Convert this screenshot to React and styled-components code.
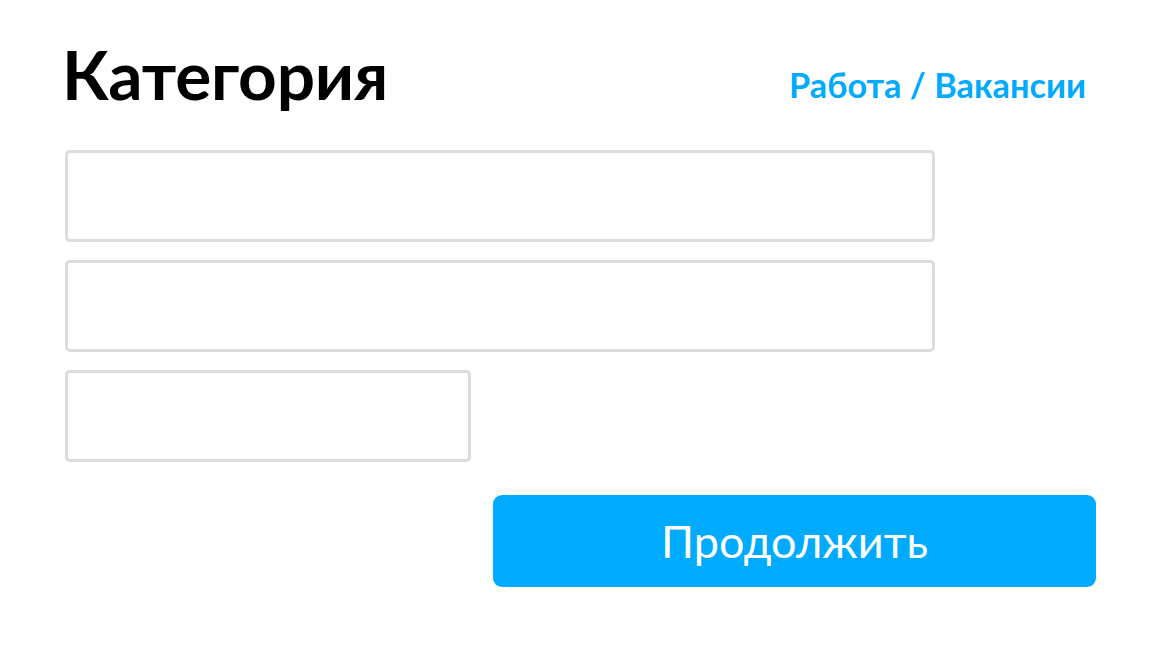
import React from "react"
import styled, { createGlobalStyle } from "styled-components"

const GlobalStyle = createGlobalStyle`
  html, body {
    margin: 0;
    padding: 0;
    background: #ffffff;
  }
  body {
    font-family: Lato, "Open Sans", "Noto Sans", sans-serif;
  }
`

const Page = styled.div`
  width: 1161px;
  height: 654px;
  box-sizing: border-box;
  padding: 40px 65px 0 65px;
  display: flex;
  flex-direction: column;
`

const Header = styled.div`
  display: flex;
  justify-content: space-between;
  align-items: baseline;
`

const Title = styled.h1`
  margin: 0 0 0 -3px;
  font-size: 67.5px;
  line-height: 1;
  font-weight: 700;
  color: #000000;
  letter-spacing: -0.2px;
`

const Crumb = styled.a`
  font-size: 34.3px;
  font-weight: 700;
  color: #00aaff;
  text-decoration: none;
  padding-right: 10px;
  position: relative;
  top: -2px;
`

const Fields = styled.div`
  margin-top: 42px;
  display: flex;
  flex-direction: column;
  gap: 18px;
`

const Field = styled.input`
  width: ${(p) => p.$width}px;
  height: 92px;
  box-sizing: border-box;
  border: 3px solid #dcdcdc;
  border-radius: 5px;
  background: #ffffff;
  outline: none;
  padding: 0 20px;
  font-family: inherit;
  font-size: 24px;
`

const Submit = styled.button`
  align-self: flex-end;
  margin-top: 33px;
  width: 603px;
  height: 92px;
  border: none;
  border-radius: 9px;
  background: #00aaff;
  color: #ffffff;
  font-family: inherit;
  font-size: 45px;
  font-weight: 400;
  cursor: pointer;
`

const App = () => {
  return (
    <>
      <GlobalStyle />
      <Page>
        <Header>
          <Title>Категория</Title>
          <Crumb href="#">Работа / Вакансии</Crumb>
        </Header>
        <Fields>
          <Field $width={870} />
          <Field $width={870} />
          <Field $width={406} />
        </Fields>
        <Submit>Продолжить</Submit>
      </Page>
    </>
  )
}

export default App
